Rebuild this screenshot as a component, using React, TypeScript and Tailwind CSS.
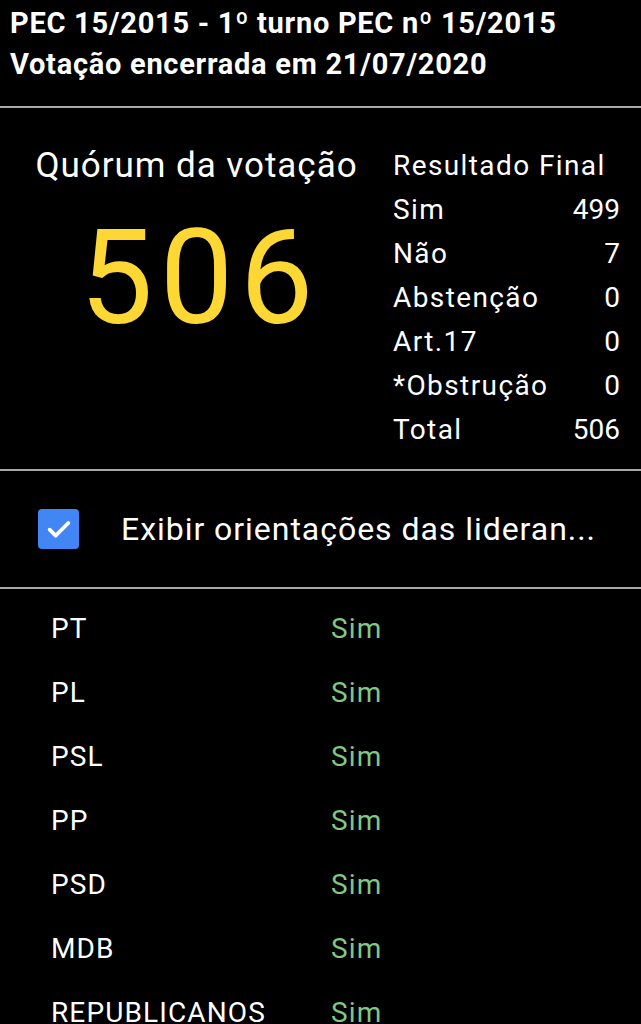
import React from "react";

// Resultado da votação
const RESULTS = [
  { label: "Sim", value: "499" },
  { label: "Não", value: "7" },
  { label: "Abstenção", value: "0" },
  { label: "Art.17", value: "0" },
  { label: "*Obstrução", value: "0" },
  { label: "Total", value: "506" },
];

const PARTIES = ["PT", "PL", "PSL", "PP", "PSD", "MDB", "REPUBLICANOS"];

const Divider = () => <div className="h-[2px] w-full bg-[#a8a8a8]" />;

export default function App() {
  return (
    <div className="w-[641px] h-[1024px] overflow-hidden bg-black text-white font-['Roboto',sans-serif] tracking-[0.06em]">
      {/* Header */}
      <div className="px-[10px] pt-[3px] pb-[21px] text-[29px] leading-[41px] font-bold tracking-[0.025em]">
        <p>PEC 15/2015 - 1º turno PEC nº 15/2015</p>
        <p>Votação encerrada em 21/07/2020</p>
      </div>
      <Divider />

      {/* Quórum + Resultado */}
      <div className="flex pt-[36px] pb-[17px]">
        <div className="w-[393px] flex flex-col items-center">
          <span className="text-[35px] leading-[44px]">Quórum da votação</span>
          <span className="mt-[25px] text-[131px] leading-none text-[#fdd835] tracking-[0.05em] pl-[0.05em]">
            506
          </span>
        </div>
        <div className="w-[227px] flex flex-col text-[28px] leading-[44px] tracking-[0.05em]">
          <span>Resultado Final</span>
          {RESULTS.map((r) => (
            <div key={r.label} className="flex justify-between">
              <span>{r.label}</span>
              <span className="tracking-normal">{r.value}</span>
            </div>
          ))}
        </div>
      </div>
      <Divider />

      {/* Checkbox row */}
      <div className="h-[116px] flex items-center pl-[38px] gap-[42px]">
        <div className="w-[41px] h-[40px] shrink-0 rounded-[4px] bg-[#4285f4] flex items-center justify-center">
          <svg width="32" height="32" viewBox="0 0 24 24" fill="none">
            <path d="M5 12.5l4.5 4.5L19 7.5" stroke="white" strokeWidth="2.8" strokeLinecap="round" strokeLinejoin="round" />
          </svg>
        </div>
        <span className="text-[32px] leading-[40px] whitespace-nowrap">Exibir orientações das lideran...</span>
      </div>
      <Divider />

      {/* Orientações */}
      <div className="pt-[8px] pl-[51px] flex flex-col tracking-[0.07em]">
        {PARTIES.map((p) => (
          <div key={p} className="flex text-[28px] leading-[64px]">
            <span className="w-[280px]">{p}</span>
            <span className="text-[#81c784]">Sim</span>
          </div>
        ))}
      </div>
    </div>
  );
}
